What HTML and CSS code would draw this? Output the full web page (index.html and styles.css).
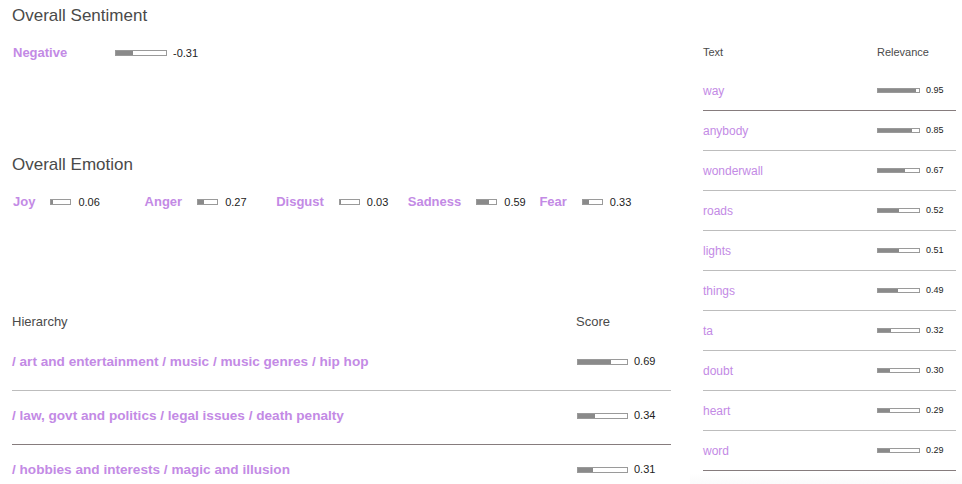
FILE: index.html
```html
<!DOCTYPE html>
<html>
<head>
<meta charset="utf-8">
<link rel="stylesheet" href="styles.css">
</head>
<body>
<div class="page">
  <main class="left">
    <section class="sentiment">
      <h2 class="title">Overall Sentiment</h2>
      <div class="sent-row">
        <span class="label sent-label">Negative</span>
        <span class="bar bar-sent"><span class="fill" style="width:33%"></span></span>
        <span class="val val-md">-0.31</span>
      </div>
    </section>

    <section class="emotion">
      <h2 class="title">Overall Emotion</h2>
      <div class="emo-row">
        <div class="emo-item"><span class="label">Joy</span><span class="bar bar-emo"><span class="fill" style="width:6%"></span></span><span class="val val-md">0.06</span></div>
        <div class="emo-item"><span class="label">Anger</span><span class="bar bar-emo"><span class="fill" style="width:29%"></span></span><span class="val val-md">0.27</span></div>
        <div class="emo-item"><span class="label">Disgust</span><span class="bar bar-emo"><span class="fill" style="width:3%"></span></span><span class="val val-md">0.03</span></div>
        <div class="emo-item"><span class="label">Sadness</span><span class="bar bar-emo"><span class="fill" style="width:62%"></span></span><span class="val val-md">0.59</span></div>
        <div class="emo-item"><span class="label">Fear</span><span class="bar bar-emo"><span class="fill" style="width:33%"></span></span><span class="val val-md">0.33</span></div>
      </div>
    </section>

    <section class="hier">
      <div class="hier-head">
        <span>Hierarchy</span>
        <span>Score</span>
      </div>
      <div class="hier-row sep-light">
        <span class="label">/ art and entertainment / music / music genres / hip hop</span>
        <span class="score"><span class="bar bar-hier"><span class="fill" style="width:67%"></span></span><span class="val val-md">0.69</span></span>
      </div>
      <div class="hier-row sep-dark">
        <span class="label">/ law, govt and politics / legal issues / death penalty</span>
        <span class="score"><span class="bar bar-hier"><span class="fill" style="width:34%"></span></span><span class="val val-md">0.34</span></span>
      </div>
      <div class="hier-row">
        <span class="label">/ hobbies and interests / magic and illusion</span>
        <span class="score"><span class="bar bar-hier"><span class="fill" style="width:31%"></span></span><span class="val val-md">0.31</span></span>
      </div>
    </section>
  </main>

  <aside class="right">
    <div class="kw-head">
      <span>Text</span>
      <span>Relevance</span>
    </div>
    <div class="kw-row sep-dark"><span class="kw">way</span><span class="score"><span class="bar bar-kw"><span class="fill" style="width:93%"></span></span><span class="val val-sm">0.95</span></span></div>
    <div class="kw-row sep-light"><span class="kw">anybody</span><span class="score"><span class="bar bar-kw"><span class="fill" style="width:83%"></span></span><span class="val val-sm">0.85</span></span></div>
    <div class="kw-row sep-light"><span class="kw">wonderwall</span><span class="score"><span class="bar bar-kw"><span class="fill" style="width:66%"></span></span><span class="val val-sm">0.67</span></span></div>
    <div class="kw-row sep-light"><span class="kw">roads</span><span class="score"><span class="bar bar-kw"><span class="fill" style="width:52%"></span></span><span class="val val-sm">0.52</span></span></div>
    <div class="kw-row sep-light"><span class="kw">lights</span><span class="score"><span class="bar bar-kw"><span class="fill" style="width:51%"></span></span><span class="val val-sm">0.51</span></span></div>
    <div class="kw-row sep-light"><span class="kw">things</span><span class="score"><span class="bar bar-kw"><span class="fill" style="width:49%"></span></span><span class="val val-sm">0.49</span></span></div>
    <div class="kw-row sep-light"><span class="kw">ta</span><span class="score"><span class="bar bar-kw"><span class="fill" style="width:32%"></span></span><span class="val val-sm">0.32</span></span></div>
    <div class="kw-row sep-light"><span class="kw">doubt</span><span class="score"><span class="bar bar-kw"><span class="fill" style="width:30%"></span></span><span class="val val-sm">0.30</span></span></div>
    <div class="kw-row sep-light"><span class="kw">heart</span><span class="score"><span class="bar bar-kw"><span class="fill" style="width:29%"></span></span><span class="val val-sm">0.29</span></span></div>
    <div class="kw-row sep-dark"><span class="kw">word</span><span class="score"><span class="bar bar-kw"><span class="fill" style="width:29%"></span></span><span class="val val-sm">0.29</span></span></div>
  </aside>
</div>
</body>
</html>
```

FILE: styles.css
```css
html, body {
  margin: 0;
  padding: 0;
  background: #fff;
  height: 100%;
  overflow: hidden;
}

body {
  font-family: "Liberation Sans", Arial, sans-serif;
  color: #222;
}

.page {
  display: grid;
  grid-template-columns: 659px 272px;
  column-gap: 19px;
  padding-left: 12px;
  height: 484px;
}

.left {
  padding-top: 6px;
}

.title {
  margin: 0;
  font-size: 17px;
  line-height: 20px;
  font-weight: normal;
  color: #4a4a4a;
}

.label {
  color: #c38ae5;
  font-weight: bold;
  font-size: 13px;
  line-height: 16px;
}

.val {
  color: #222;
}

.val-md {
  font-size: 11px;
  line-height: 13px;
}

.val-sm {
  font-size: 9px;
  line-height: 11px;
}

/* bars */
.bar {
  display: inline-block;
  box-sizing: border-box;
  border: 1px solid #9a9a9a;
  background: #fff;
  overflow: hidden;
  flex: none;
}

.fill {
  display: block;
  height: 100%;
  background: #8a8a8a;
}

.bar-sent { width: 52px; height: 6px; }
.bar-emo { width: 21px; height: 6px; }
.bar-hier { width: 51px; height: 6px; }
.bar-kw { width: 43px; height: 5px; }

/* sentiment */
.sent-row {
  display: flex;
  align-items: center;
  margin-top: 19px;
  padding-left: 1px;
}

.sent-label {
  width: 102px;
}

.sent-row .bar {
  margin-right: 6px;
}

/* emotion */
.emotion {
  margin-top: 94px;
}

.emo-row {
  display: flex;
  margin-top: 19px;
  padding-left: 1px;
}

.emo-item {
  width: 20%;
  display: flex;
  align-items: center;
}

.emo-item .bar {
  margin-left: 15px;
  margin-right: 7px;
}

/* hierarchy */
.hier {
  margin-top: 104px;
}

.hier-head {
  display: grid;
  grid-template-columns: 1fr 95px;
  font-size: 13px;
  line-height: 15px;
  color: #4a4a4a;
  padding-bottom: 8px;
}

.hier-row {
  display: grid;
  grid-template-columns: 1fr 95px;
  align-items: center;
  padding: 17px 0 21px;
  border-bottom: 1px solid transparent;
}

.hier-row .label {
  font-size: 13.6px;
  line-height: 15px;
}

.score {
  display: flex;
  align-items: center;
  padding-left: 1px;
}

.hier-row .bar {
  margin-right: 6px;
}

.sep-light { border-bottom: 1px solid #bdbdbd; }
.sep-dark { border-bottom: 1px solid #867c7d; }

/* keywords */
.right {
  padding: 34px 6px 0 13px;
  background: linear-gradient(to bottom, #fff calc(100% - 26px), #f4f4f4 100%);
}

.kw-head {
  display: grid;
  grid-template-columns: 174px 1fr;
  align-items: center;
  height: 37px;
  font-size: 11px;
  line-height: 13px;
  color: #4a4a4a;
}

.kw-row {
  display: grid;
  grid-template-columns: 174px 1fr;
  align-items: center;
  height: 39px;
}

.kw {
  color: #c38ae5;
  font-size: 12px;
  line-height: 14px;
}

.kw-row .score {
  padding-left: 0;
}

.kw-row .bar {
  margin-right: 6px;
}
```
